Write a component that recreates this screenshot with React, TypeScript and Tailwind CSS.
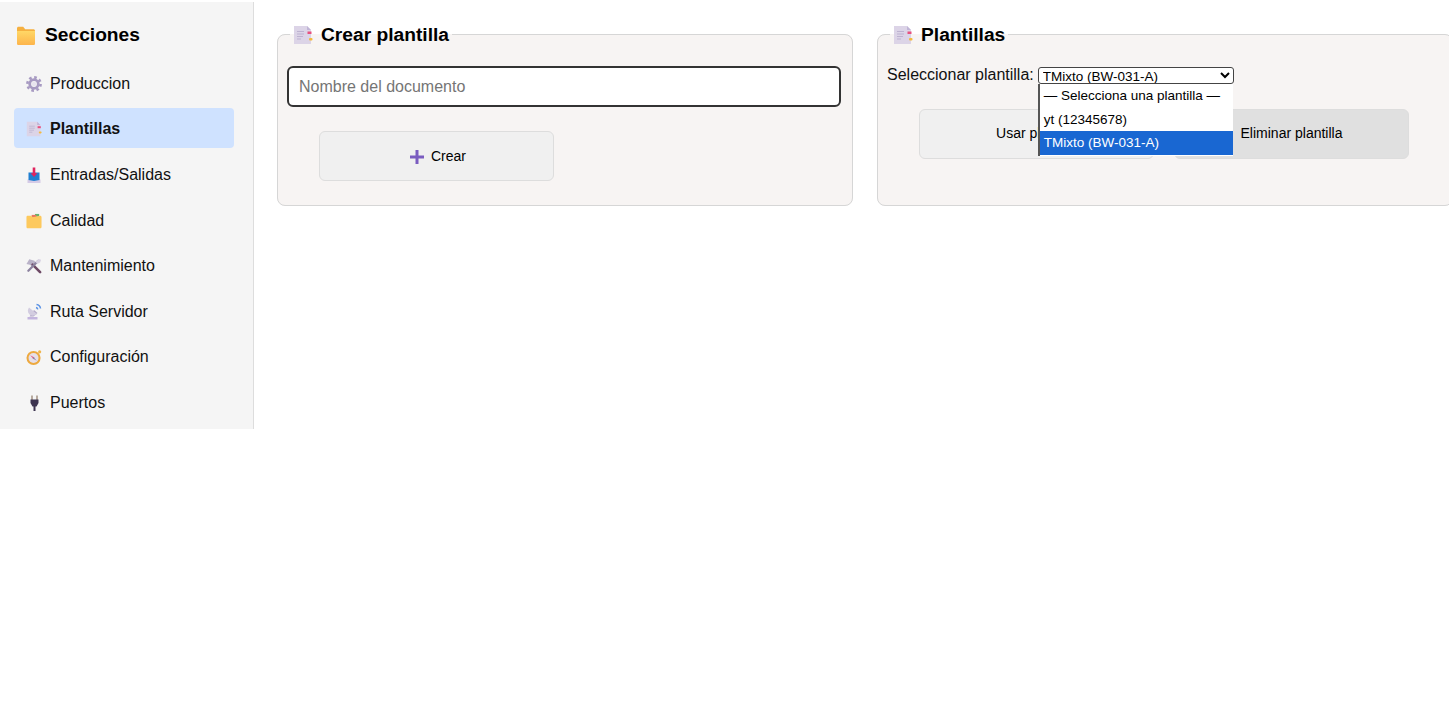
import React from "react";

function FolderIcon() {
  return (
    <svg width="20" height="20" viewBox="0 0 20 20" className="shrink-0">
      <defs>
        <linearGradient id="folderFill" x1="0" y1="0" x2="0" y2="1">
          <stop offset="0" stopColor="#ffd766" />
          <stop offset="1" stopColor="#fdb44b" />
        </linearGradient>
      </defs>
      <path d="M1 2.500C1 1.400 1.600 .8 2.600 .8h4.600l2 2.400h8.200c.9 0 1.600.7 1.600 1.600V8H1z" fill="#f5b040" />
      <path d="M1 5h18v12.400c0 1-.7 1.600-1.600 1.600H2.600C1.600 19 1 18.400 1 17.400z" fill="url(#folderFill)" />
    </svg>
  );
}

function DocIcon({ size = 20 }: { size?: number }) {
  return (
    <svg width={size} height={size} viewBox="0 0 20 20" className="shrink-0">
      <path d="M1 1h13l4 4v14H1z" fill="#dcd4e7" />
      <path d="M14 1l4 4h-4z" fill="#c0b5d6" />
      <path d="M4 6.500h7M4 9h7M4 11.500h6M4 14h4" stroke="#bdb2d0" strokeWidth="1" />
      <rect x="14.500" y="6.500" width="4" height="2.500" fill="#e8507e" />
      <rect x="16" y="13" width="3.500" height="2.500" rx="1" fill="#f5b93f" />
    </svg>
  );
}

function GearIcon() {
  return (
    <svg width="16" height="16" viewBox="0 0 16 16">
      <circle cx="8" cy="8" r="6.600" fill="none" stroke="#a79ac2" strokeWidth="2.600" strokeDasharray="2.600 2.580" />
      <circle cx="8" cy="8" r="4.300" fill="none" stroke="#a79ac2" strokeWidth="2.800" />
      <circle cx="8" cy="8" r="2.200" fill="#e8e4ef" />
    </svg>
  );
}

function InboxIcon() {
  return (
    <svg width="16" height="16" viewBox="0 0 16 16">
      <rect x="1.500" y="12.500" width="13" height="3.500" fill="#d5cbe6" />
      <path d="M2.500 5.500h11v7.500l-5.500 1-5.500-1z" fill="#1f7fd1" />
      <path d="M8 10L4.500 6.300h2.200V.5h2.600v5.800h2.200z" fill="#e0245e" />
    </svg>
  );
}

function TabFolderIcon() {
  return (
    <svg width="17" height="16" viewBox="0 0 17 16">
      <path d="M9.500 .5h4.500v3H9.500z" fill="#67b56d" />
      <path d="M6 1.500h5v3H6z" fill="#e8785f" />
      <path d="M.5 4c0-1 .6-1.500 1.500-1.500h3.500L7 4l8-1.500c.9 0 1.500.6 1.500 1.500v10.300c0 1-.6 1.500-1.500 1.500H2c-.9 0-1.500-.5-1.500-1.500z" fill="#fdc95d" />
    </svg>
  );
}

function ToolsIcon() {
  return (
    <svg width="17" height="16" viewBox="0 0 17 16">
      <path d="M3.500 .8l5.500 1.700 1.500 3-3.500 3-3-1.800L.5 6z" fill="#b9b2c8" />
      <path d="M15 14.500L7 6.500" stroke="#6e4a66" strokeWidth="2.800" strokeLinecap="round" />
      <path d="M13 2.500L2.500 13" stroke="#8c829f" strokeWidth="2.400" strokeLinecap="round" />
      <path d="M10 3.500L13.500 .5l2.500.8-1 3-3 1.700z" fill="#d8d2e2" />
    </svg>
  );
}

function DishIcon() {
  return (
    <svg width="16" height="17" viewBox="0 0 16 17">
      <path d="M1.500 14h10v2.500h-10z" fill="#c3b5de" />
      <path d="M3.500 13.500L8 7l3.500 3-4 3.500z" fill="#b3a9c8" />
      <path d="M3 4.500l8 6.500c-2.500 2.300-6.200 2.200-7.900 0S1.500 7 3 4.500z" fill="#d3cde0" />
      <path d="M10 4.500c1 .2 1.600.8 1.800 1.800M10.500 1.500c2.200.3 3.700 1.800 4 4" stroke="#5b93e6" strokeWidth="1.500" fill="none" />
    </svg>
  );
}

function CompassIcon() {
  return (
    <svg width="17" height="17" viewBox="0 0 17 17">
      <circle cx="14.500" cy="2.500" r="1.700" fill="#f0b54a" />
      <circle cx="8" cy="9" r="7.500" fill="#eda93f" />
      <circle cx="8" cy="9" r="5.300" fill="#e6dfe9" />
      <path d="M4.500 6l4.500 2.500L8 10z" fill="#e8557c" />
      <path d="M11.500 12L7 9.500 8 8z" fill="#8f86a5" />
    </svg>
  );
}

function PlugIcon() {
  return (
    <svg width="16" height="16" viewBox="0 0 16 16">
      <path d="M6 .5v4.500M11 .5v4.500" stroke="#a8988a" strokeWidth="1.600" />
      <path d="M4.500 4.500h8v3.500l-2 3.500h-4l-2-3.500z" fill="#3d3450" />
      <path d="M7.500 11h2v5h-2z" fill="#3d3450" />
    </svg>
  );
}

const items = [
  { label: "Produccion", icon: <GearIcon /> },
  { label: "Plantillas", icon: <DocIcon size={16} />, active: true },
  { label: "Entradas/Salidas", icon: <InboxIcon /> },
  { label: "Calidad", icon: <TabFolderIcon /> },
  { label: "Mantenimiento", icon: <ToolsIcon /> },
  { label: "Ruta Servidor", icon: <DishIcon /> },
  { label: "Configuración", icon: <CompassIcon /> },
  { label: "Puertos", icon: <PlugIcon /> },
];

function Sidebar() {
  return (
    <aside className="mt-[2px] h-[427px] w-[254px] shrink-0 border-r border-[#dddddd] bg-[#f5f5f5] pl-[14px] pr-[19px] pt-[23px]">
      <h2 className="mb-[18px] flex h-[21px] items-center gap-[9px] pl-[2px] text-[19.200px] font-bold text-black">
        <FolderIcon />
        Secciones
      </h2>
      <nav className="flex flex-col gap-[5.500px]">
        {items.map((item) => (
          <div
            key={item.label}
            className={
              item.active
                ? "-mt-[1.500px] mb-[1.500px] flex h-[40px] items-center gap-[8px] rounded-[4px] bg-[#cfe2ff] pl-[12px] pt-[1px] text-[16px] font-bold text-[#111111]"
                : "flex h-[40px] items-center gap-[8px] pl-[12px] text-[16px] text-[#111111]"
            }
          >
            <span className="flex w-[16px] justify-center">{item.icon}</span>
            {item.label}
          </div>
        ))}
      </nav>
    </aside>
  );
}

function PanelTitle({ children }: { children: React.ReactNode }) {
  return (
    <legend className="ml-[3px] flex h-[22px] items-center gap-[8px] pl-[3px] pr-[3px] pt-[2px] text-[19.200px] font-bold text-black">
      <DocIcon />
      {children}
    </legend>
  );
}

function SelectMenu() {
  return (
    <div className="relative">
      <select
        defaultValue="b"
        className="block h-[17px] w-[196px] rounded-[3px] border border-[#444444] bg-white py-0 text-[13.500px] leading-[13px] text-black"
      >
        <option value="">— Selecciona una plantilla —</option>
        <option value="a">yt (12345678)</option>
        <option value="b">TMixto (BW-031-A)</option>
      </select>
      <div className="absolute left-0 top-[17px] z-10 w-[195px] border-l-2 border-[#555555] bg-white pb-[1px] text-[13.500px] text-black">
        <div className="flex h-[24px] items-center pl-[4px] pt-[2px]">— Selecciona una plantilla —</div>
        <div className="flex h-[23px] items-center pl-[4px] pt-[2px]">yt (12345678)</div>
        <div className="flex h-[24px] items-center bg-[#1967d2] pl-[4px] pt-[2px] text-white">TMixto (BW-031-A)</div>
      </div>
    </div>
  );
}

export default function App() {
  return (
    <div className="flex h-[720px] w-full overflow-hidden bg-white font-['Liberation_Sans',Arial,sans-serif]">
      <Sidebar />
      <main className="flex min-w-0 flex-1 items-start gap-[24px] overflow-hidden pl-[23px] pt-[23px]">
        <fieldset className="h-[183px] w-[576px] shrink-0 rounded-[8px] border border-[#d6d6d6] bg-[#f7f4f3] px-[9px]">
          <PanelTitle>Crear plantilla</PanelTitle>
          <input
            placeholder="Nombre del documento"
            className="mt-[21px] block h-[41px] w-[554px] rounded-[6px] border-2 border-[#333333] bg-white px-[10px] text-[16px] placeholder:text-[#757575]"
          />
          <div className="mt-[24px] pl-[32px]">
            <button className="flex h-[50px] w-[235px] items-center justify-center gap-[7px] rounded-[6px] border border-[#dddddd] bg-[#f0f0f0] pl-[3px] pt-[1px] text-[14px] text-black">
              <svg width="14" height="14" viewBox="0 0 14 14">
                <path d="M7 0v14M0 7h14" stroke="#7a5cc0" strokeWidth="3" />
              </svg>
              Crear
            </button>
          </div>
        </fieldset>
        <fieldset className="h-[183px] w-[576px] shrink-0 rounded-[8px] border border-[#d6d6d6] bg-[#f7f4f3] px-[9px]">
          <PanelTitle>Plantillas</PanelTitle>
          <div className="mt-[18px] flex items-center gap-[4px] text-[16px] text-[#111111]">
            <label>Seleccionar plantilla:</label>
            <SelectMenu />
          </div>
          <div className="mt-[22px] flex gap-[20px] pl-[32px]">
            <button className="h-[50px] w-[235px] rounded-[6px] border border-[#dddddd] bg-[#f0f0f0] pb-[2px] text-[14px] text-black">
              Usar plantilla
            </button>
            <button className="h-[50px] w-[235px] rounded-[6px] border border-[#dddddd] bg-[#e0e0e0] pb-[2px] text-[14px] text-black">
              Eliminar plantilla
            </button>
          </div>
        </fieldset>
      </main>
    </div>
  );
}
